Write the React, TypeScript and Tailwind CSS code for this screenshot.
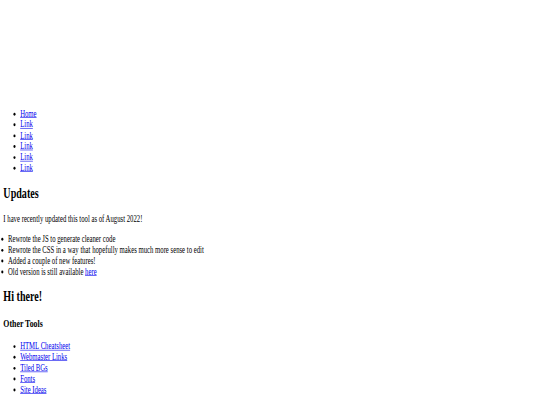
import React from 'react';

const navLinks = ['Home', 'Link', 'Link', 'Link', 'Link', 'Link'];
const updates = [
  'Rewrote the JS to generate cleaner code',
  'Rewrote the CSS in a way that hopefully makes much more sense to edit',
  'Added a couple of new features!',
];
const tools = ['HTML Cheatsheet', 'Webmaster Links', 'Tiled BGs', 'Fonts', 'Site Ideas'];

const A: React.FC<{ children: React.ReactNode }> = ({ children }) => (
  <a href="#" className="text-[#0000ee] underline">
    {children}
  </a>
);

export default function App() {
  return (
    <div className="w-[540px] h-[405px] overflow-hidden bg-white">
      <div className="w-[1286px] origin-top-left scale-x-[0.42] scale-y-[0.587] p-2 font-['Liberation_Serif',serif] text-[16px] leading-[1.15] text-black">
        {/* empty header area */}
        <div className="h-[161px]"></div>

        <ul className="list-disc pl-10 my-4">
          {navLinks.map((l, i) => (
            <li key={i}>
              <A>{l}</A>
            </li>
          ))}
        </ul>

        <h2 className="text-[24px] font-bold my-[20.5px]">Updates</h2>
        <p className="my-4">I have recently updated this tool as of August 2022!</p>
        <ul className="list-disc pl-[11px] my-4">
          {updates.map((u, i) => (
            <li key={i}>{u}</li>
          ))}
          <li>
            Old version is still available <A>here</A>
          </li>
        </ul>

        <h2 className="text-[24px] font-bold my-[20.5px]">Hi there!</h2>
        <h3 className="text-[18.72px] font-bold my-[19px]">Other Tools</h3>
        <ul className="list-disc pl-10 my-4">
          {tools.map((t, i) => (
            <li key={i}>
              <A>{t}</A>
            </li>
          ))}
        </ul>
      </div>
    </div>
  );
}
